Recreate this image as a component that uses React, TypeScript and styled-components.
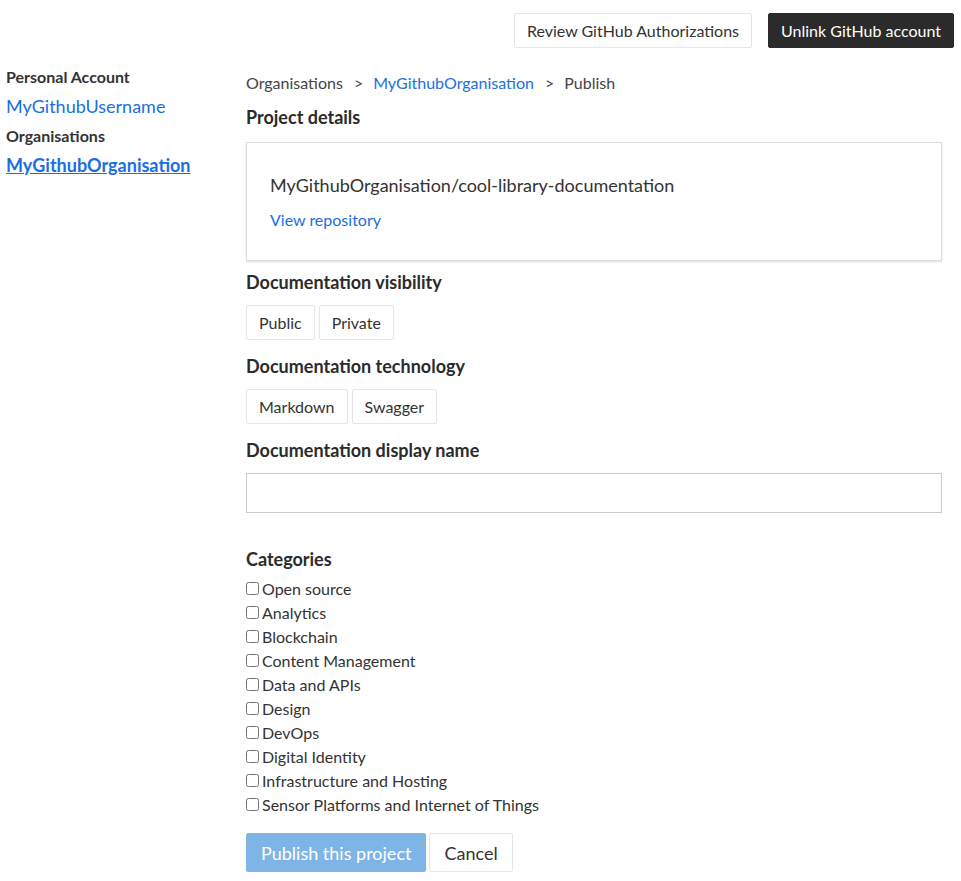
import styled, { createGlobalStyle } from "styled-components";

const GlobalStyle = createGlobalStyle`
  body {
    margin: 0;
    background: #fff;
    font-family: Lato, "Open Sans", Arial, sans-serif;
    color: #333;
  }
  * {
    box-sizing: border-box;
  }
`;

const categories = [
  "Open source",
  "Analytics",
  "Blockchain",
  "Content Management",
  "Data and APIs",
  "Design",
  "DevOps",
  "Digital Identity",
  "Infrastructure and Hosting",
  "Sensor Platforms and Internet of Things",
];

const Page = styled.div`
  width: 961px;
`;

const TopBar = styled.div`
  display: flex;
  justify-content: flex-end;
  gap: 16px;
  padding: 13px 7px 0 0;
`;

const Button = styled.button<{ $variant?: "dark" | "primary" | "plain"; $large?: boolean }>`
  font-family: inherit;
  font-size: ${({ $large }) => ($large ? "18px" : "16px")};
  height: ${({ $large }) => ($large ? "39px" : "35px")};
  padding: ${({ $large }) => ($large ? "0 14px" : "0 12px")};
  border: 1px solid
    ${({ $variant }) =>
      $variant === "dark" ? "#2b2b2b" : $variant === "primary" ? "#7eb4e6" : "#e6e6e6"};
  background: ${({ $variant }) =>
    $variant === "dark" ? "#2b2b2b" : $variant === "primary" ? "#7eb4e6" : "#fff"};
  color: ${({ $variant }) => ($variant === "dark" || $variant === "primary" ? "#fff" : "#333")};
  border-radius: 2px;
  cursor: pointer;
`;

const Body = styled.div`
  display: flex;
`;

const Sidebar = styled.nav`
  width: 246px;
  padding: 14px 0 0 6px;
  display: flex;
  flex-direction: column;
`;

const SideTitle = styled.div`
  font-size: 16px;
  font-weight: 700;
  line-height: 29.5px;
  color: #333;
`;

const SideLink = styled.a<{ $active?: boolean }>`
  font-size: 18px;
  line-height: 29.5px;
  color: #1a6fe0;
  font-weight: ${({ $active }) => ($active ? 700 : 400)};
  text-decoration: ${({ $active }) => ($active ? "underline" : "none")};
`;

const Main = styled.main`
  width: 696px;
  padding-top: 24px;
`;

const Breadcrumb = styled.div`
  font-size: 16px;
  line-height: 22px;
  color: #444;
`;

const Crumb = styled.a`
  color: #1a6fe0;
  text-decoration: none;
`;

const Sep = styled.span`
  margin: 0 10px 0 11px;
`;

const Heading = styled.h2<{ $top?: number; $bottom?: number }>`
  font-size: 18px;
  font-weight: 700;
  line-height: 22px;
  margin: ${({ $top }) => $top ?? 0}px 0 ${({ $bottom }) => $bottom ?? 12}px;
  color: #2b2b2b;
`;

const Card = styled.div`
  border: 1px solid #ddd;
  box-shadow: 0 1px 2px rgba(0, 0, 0, 0.12);
  padding: 31px 23px 30px;
`;

const RepoName = styled.div`
  font-size: 18px;
  line-height: 22px;
  color: #333;
  margin-bottom: 14px;
`;

const RepoLink = styled.a`
  font-size: 16px;
  line-height: 20px;
  color: #1a6fe0;
  text-decoration: none;
  display: block;
`;

const ToggleGroup = styled.div`
  display: flex;
  gap: 4px;
`;

const TextInput = styled.input`
  display: block;
  width: 696px;
  height: 40px;
  border: 1px solid #ccc;
  font-family: inherit;
  font-size: 16px;
  padding: 0 10px;
`;

const CheckList = styled.div`
  display: flex;
  flex-direction: column;
  margin-top: -6px;
`;

const CheckRow = styled.label`
  display: flex;
  align-items: center;
  height: 24px;
  font-size: 16px;
  color: #333;
`;

const Box = styled.input`
  width: 13px;
  height: 13px;
  margin: 0 3px 0 0;
`;

const Actions = styled.div`
  display: flex;
  gap: 3px;
  margin-top: 17px;
`;

export default function App() {
  return (
    <Page>
      <GlobalStyle />
      <TopBar>
        <Button $variant="plain">Review GitHub Authorizations</Button>
        <Button $variant="dark">Unlink GitHub account</Button>
      </TopBar>
      <Body>
        <Sidebar>
          <SideTitle>Personal Account</SideTitle>
          <SideLink href="#">MyGithubUsername</SideLink>
          <SideTitle>Organisations</SideTitle>
          <SideLink href="#" $active>
            MyGithubOrganisation
          </SideLink>
        </Sidebar>
        <Main>
          <Breadcrumb>
            Organisations<Sep>&gt;</Sep>
            <Crumb href="#">MyGithubOrganisation</Crumb>
            <Sep>&gt;</Sep>Publish
          </Breadcrumb>
          <Heading $top={12} $bottom={14}>
            Project details
          </Heading>
          <Card>
            <RepoName>MyGithubOrganisation/cool-library-documentation</RepoName>
            <RepoLink href="#">View repository</RepoLink>
          </Card>
          <Heading $top={10}>Documentation visibility</Heading>
          <ToggleGroup>
            <Button $variant="plain">Public</Button>
            <Button $variant="plain">Private</Button>
          </ToggleGroup>
          <Heading $top={15}>Documentation technology</Heading>
          <ToggleGroup>
            <Button $variant="plain">Markdown</Button>
            <Button $variant="plain">Swagger</Button>
          </ToggleGroup>
          <Heading $top={15}>Documentation display name</Heading>
          <TextInput type="text" />
          <Heading $top={35}>Categories</Heading>
          <CheckList>
            {categories.map((c) => (
              <CheckRow key={c}>
                <Box type="checkbox" />
                {c}
              </CheckRow>
            ))}
          </CheckList>
          <Actions>
            <Button $variant="primary" $large>
              Publish this project
            </Button>
            <Button $variant="plain" $large>
              Cancel
            </Button>
          </Actions>
        </Main>
      </Body>
    </Page>
  );
}
